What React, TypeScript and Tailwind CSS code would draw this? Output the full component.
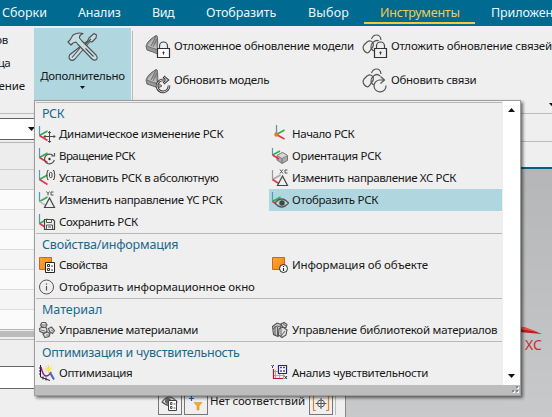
import React from "react";

type IconProps = { children: React.ReactNode; className?: string };

const Icon16 = ({ children, className = "" }: IconProps) => (
  <svg viewBox="0 0 18 18" fill="none" className={`h-[18px] w-[18px] shrink-0 ${className}`}>
    {children}
  </svg>
);

const Csys = ({ x = "#e8304a", y = "#35ab45", z = "#4d9cb8" }: { x?: string; y?: string; z?: string }) => (
  <g strokeWidth="1.2">
    <path d="M1.5 1v9.500" stroke={z} />
    <path d="M1.500 10.500L9.500 6" stroke={y} strokeWidth="1.500" />
    <path d="M1.500 10.500L9.500 15.500" stroke={x} strokeWidth="1.500" />
  </g>
);

const Move = () => (
  <Icon16>
    <Csys />
    <path d="M11.500 6.500v11M6 11.500h11M10 8l1.500-1.500L13 8M10 16l1.500 1.500L13 16M7.500 10L6 11.500 7.500 13M15.500 10l1.500 1.500-1.500 1.500" stroke="#4a4a4a" />
  </Icon16>
);
const Rotate = () => (
  <Icon16>
    <Csys />
    <path d="M15 8.500a4.900 4.900 0 1 0 1.300 4.500M16.500 6v3h-3" stroke="#555" strokeWidth="1.200" />
    <circle cx="11.500" cy="12" r="1.200" fill="#333" />
  </Icon16>
);
const Absolute = () => (
  <Icon16>
    <Csys />
    <path d="M10.500 1.500h-1q-1.500 4.500 0 9h1M15 1.500h1q1.500 4.500 0 9h-1" stroke="#444" />
    <rect x="11.500" y="3.500" width="2.500" height="5" rx="1" stroke="#444" />
  </Icon16>
);
const Direction = ({ axis }: { axis: "Y" | "X" }) => (
  <Icon16>
    {axis === "Y" ? <Csys x="#bdbdbd" /> : <Csys y="#aaa" z="#999" />}
    <path d="M11.500 7L16.500 16.500h-10z" stroke="#444" strokeWidth="1.200" fill="#efefef" />
    {axis === "Y" ? (
      <path d="M8.500 .5L10 2.500 11.500 .5M10 2.500v2M15.500 1H13v3h2.500" stroke="#555" />
    ) : (
      <path d="M9 .5l3 4M12 .5l-3 4M16.500 1H14v3h2.500" stroke="#555" />
    )}
  </Icon16>
);
const Save = () => (
  <Icon16>
    <Csys />
    <path d="M6.500 6.500h8.500l1.500 1.500v8.500h-10z" fill="#efefef" stroke="#444" strokeWidth="1.200" />
    <path d="M8.500 6.500v3h5v-3M8.500 16.500v-4.500h6v4.500M10 14h3" stroke="#555" />
  </Icon16>
);
const Origin = () => (
  <Icon16>
    <path d="M5.500 0v10" stroke="#4d9cb8" strokeWidth="1.300" />
    <path d="M5.500 9.500L13.500 5" stroke="#35ab45" strokeWidth="1.500" />
    <path d="M5.500 9.500L13.500 14" stroke="#e8304a" strokeWidth="1.500" />
    <circle cx="5.500" cy="9.500" r="2.200" fill="#e27b22" />
  </Icon16>
);
const Orient = () => (
  <Icon16>
    <path d="M6 8.500L11.500 5.500l5 3v5l-5.500 3-5-3.500z" fill="#aaa" stroke="#777" />
    <path d="M6 8.500l5.500-3 5 3L11 11.500z" fill="#d8d8d8" stroke="#888" />
    <path d="M11 11.500v5" stroke="#777" />
    <path d="M1.500 1v7" stroke="#4d9cb8" strokeWidth="1.200" />
    <path d="M1.500 8L9 4" stroke="#35ab45" strokeWidth="1.500" />
    <path d="M1.500 8L8 12" stroke="#e8304a" strokeWidth="1.500" />
  </Icon16>
);
const Eye = () => (
  <Icon16>
    <Csys />
    <path d="M4 12q6.500-8 13.500 0-7 8-13.500 0z" fill="#b0d7e0" stroke="#555" strokeWidth="1.300" />
    <circle cx="11" cy="12" r="2.700" fill="#444" />
  </Icon16>
);
const Orange = () => (
  <>
    <defs>
      <linearGradient id="orange" x2="1" y2="1">
        <stop stopColor="#f8aa2d" />
        <stop offset="1" stopColor="#ed8518" />
      </linearGradient>
    </defs>
    <path d="M1.500 1.500h12v12h-12z" fill="url(#orange)" stroke="#cf6425" />
  </>
);
const Properties = () => (
  <Icon16>
    <Orange />
    <path d="M7.500 6.500h9v10h-9z" fill="#fff" stroke="#222" />
    <path d="M9.500 8.500h2v2h-2zM9.500 12.500h2v2h-2zM13 10h2M13 14h2" stroke="#222" strokeWidth=".9" />
  </Icon16>
);
const ObjectInfo = () => (
  <Icon16>
    <Orange />
    <circle cx="12.500" cy="12.500" r="4" fill="#fff" stroke="#222" />
    <path d="M12.500 12v3M12.500 10v1" stroke="#222" strokeWidth="1.200" />
  </Icon16>
);
const Info = () => (
  <Icon16>
    <circle cx="8.500" cy="9" r="7" stroke="#555" />
    <path d="M8.500 8v4.500M8.500 5.500v1.200" stroke="#555" strokeWidth="1.200" />
  </Icon16>
);
const Materials = () => (
  <Icon16>
    <path d="M4 1.500h3.500L9 4 7.500 6.500H4L2.500 4zM1.500 7.500l3-1.500 4 1 .5 3.500-3 1.500-4-1.500zM5 13l4-2 3 1.500-1 3-4 1zM10.500 7.500l3-1.500 3 3.500-2 3-3-2z" fill="#e3e3e3" stroke="#5c5c5c" strokeWidth="1.200" />
    <path d="M3 4h5M3 9l4 1M8 14h3M13 9l2 1" stroke="#777" />
  </Icon16>
);
const Library = () => (
  <Icon16>
    <path d="M1.500 5.500L6 2l4 1.500v3l-3 9-4.500-2z" fill="#c8c8c8" stroke="#555" strokeWidth="1.100" />
    <path d="M4 5v9M6.500 6v10M2 8l4-3 4 1" stroke="#555" strokeWidth=".9" />
    <path d="M8 8l4-2 4 3-1 5-4 2.500L7.500 14zM10 3l3-1.500 3 2-1 3h-3z" fill="#ddd" stroke="#555" strokeWidth="1.100" />
    <path d="M10 8v7l4-5M12 3l3 2" stroke="#666" />
  </Icon16>
);
const Optimize = () => (
  <Icon16>
    <path d="M2.500 1v12L12 16.500M1 4h2M1 7h2M1 10h2M5 12.500v3M8 13.500v3" stroke="#222" />
    <path d="M3 3q2 9 5 9 3 0 5-4" stroke="#9519a5" strokeWidth="1.500" />
    <path d="M10.500 1v8M6.500 5h8M7.500 2l6 6M13.500 2l-6 6" stroke="#f0e640" />
    <path d="M12 8.500l4 7" stroke="#5367bd" strokeWidth="2.200" />
  </Icon16>
);
const Sensitivity = () => (
  <Icon16>
    <path d="M4.500 6v8M8.500 6v8M12.500 10v5M2 7.500h10M2 11.500h12" stroke="#aaa" />
    <path d="M2.500 5v9.500H12" stroke="#c1121e" strokeWidth="1.200" />
    <path d="M7.500 1.500h8v8h-8z" fill="#fff" stroke="#28219b" strokeWidth="1.200" />
    <path d="M9 3.500h2M12 3.500h2M9 7h2M12 7h2" stroke="#4741a8" strokeWidth="1.500" />
    <path d="M.5 1L1.500 2.500 3 1M1.500 2.500v1.500M13.500 12l2.500 3M16 12l-2.500 3" stroke="#222" strokeWidth=".9" />
  </Icon16>
);

const Icon24 = ({ children }: IconProps) => (
  <svg viewBox="0 0 26 26" fill="none" className="h-[26px] w-[26px] shrink-0">
    {children}
  </svg>
);
const Shell = () => (
  <>
    <path d="M11 1.500q1.500 0 1.500 2L13 15l4 3-4 2-5-2-6-2-1-4q1-4 5-7z" fill="#989898" stroke="#666" />
    <path d="M2 12l8-9-4 9 4-3 2 6-6-1z" fill="#bcbcbc" />
    <path d="M11 2L6 12M2 12l5 2 6 2M12 5L8 13" stroke="#707070" />
  </>
);
const Links = () => (
  <g stroke="#555" strokeWidth="1.200">
    <path d="M9.500 5q1.500-4 5-4 4 0 4.500 5M2.500 17q-2.500-3-.5-6l3-3q4-2.500 6 1 1 3-1 5l-3 4q-2 2-4.500-1z" />
    <path d="M12 17q-3-1-3-4 0-3 2.500-5Q15 5 18 8" />
  </g>
);
const Lock = ({ fill = "#fff" }: { fill?: string }) => (
  <>
    <path d="M14.500 15v-3a4 4 0 0 1 8 0v3" stroke="#efefef" strokeWidth="3" />
    <path d="M14.500 15v-3a4 4 0 0 1 8 0v3" stroke="#444" strokeWidth="1.200" />
    <path d="M12.500 14.500h12v9h-12z" fill={fill} stroke="#333" strokeWidth="1.200" />
    <path d="M18.500 17.500v3M17.500 18.500h2" stroke="#333" strokeWidth="1.200" />
  </>
);
const Refresh = ({ heavy = false }: { heavy?: boolean }) => (
  <>
    {heavy && <path d="M24 17.500a6 6 0 1 1-7-5.500h5M18.500 8.500L22.500 12l-4 3.500" stroke="#2e2e2e" strokeWidth="2.600" />}
    <path
      d="M24 17.500a6 6 0 1 1-7-5.500h5M18.500 8.500L22.500 12l-4 3.500"
      stroke={heavy ? "#f2f2f2" : "#555"}
      strokeWidth={heavy ? 0.9 : 1.2}
    />
  </>
);

const Tools = () => (
  <svg viewBox="0 0 32 30" fill="#c6dee3" stroke="#4f4f4f" strokeWidth="1.100" strokeLinejoin="round" className="h-[30px] w-8">
    <path d="M27 1.500l2.500 1.500-.5 3-4 4-2-.5L8 27q-3 2.500-5 .5-2-2 0-5L20.500 9 22 6z" />
    <path d="M5 25.500l8-9.500M16 14.500l8-7.500" fill="none" />
    <path d="M1 10l2-2 3-5q5-3 10-1.500-4 1.500-3.500 4.500L15 9l14 14q2 3 .5 4.500-2 1.500-4.500-.5L11 12.500 9 10 6 11l-2 2z" />
    <path d="M18.500 16.500l8 8" fill="none" />
  </svg>
);

const tabs = [
  { text: "Сборки", cls: "pl-[2px] w-[78px]" },
  { text: "Анализ", cls: "w-[74px] tracking-[-0.2px]" },
  { text: "Вид", cls: "w-[54px] tracking-[-0.5px]" },
  { text: "Отобразить", cls: "w-[102px] tracking-[-0.1px]" },
  { text: "Выбор", cls: "w-[56px] tracking-[0.2px]" },
  { text: "Инструменты", cls: "w-[111px] pl-4 border-b-2 border-[#fcc73f] text-[#f4ca55] tracking-[-0.22px]" },
  { text: "Приложения", cls: "pl-4 tracking-[-0.1px]" },
];

type Entry = { text: string; icon: React.ReactNode; t: string; active?: boolean } | null;
type Group = { title: string; t: string; entries: Entry[] };

const groups: Group[] = [
  {
    title: "РСК",
    t: "tracking-[-0.45px]",
    entries: [
      { text: "Динамическое изменение РСК", icon: <Move />, t: "tracking-[-0.3px]" },
      { text: "Начало РСК", icon: <Origin />, t: "tracking-[-0.4px]" },
      { text: "Вращение РСК", icon: <Rotate />, t: "tracking-[-0.55px]" },
      { text: "Ориентация РСК", icon: <Orient />, t: "tracking-[-0.3px]" },
      { text: "Установить РСК в абсолютную", icon: <Absolute />, t: "tracking-[-0.34px]" },
      { text: "Изменить направление XC РСК", icon: <Direction axis="X" />, t: "tracking-[-0.35px]" },
      { text: "Изменить направление YC РСК", icon: <Direction axis="Y" />, t: "tracking-[-0.37px]" },
      { text: "Отобразить РСК", icon: <Eye />, t: "tracking-[-0.27px]", active: true },
      { text: "Сохранить РСК", icon: <Save />, t: "tracking-[-0.37px]" },
      null,
    ],
  },
  {
    title: "Свойства/информация",
    t: "tracking-[-0.18px]",
    entries: [
      { text: "Свойства", icon: <Properties />, t: "tracking-[-0.4px]" },
      { text: "Информация об объекте", icon: <ObjectInfo />, t: "tracking-[-0.12px]" },
      { text: "Отобразить информационное окно", icon: <Info />, t: "tracking-[-0.08px]" },
      null,
    ],
  },
  {
    title: "Материал",
    t: "tracking-normal",
    entries: [
      { text: "Управление материалами", icon: <Materials />, t: "tracking-[-0.35px]" },
      { text: "Управление библиотекой материалов", icon: <Library />, t: "tracking-[-0.25px]" },
    ],
  },
  {
    title: "Оптимизация и чувствительность",
    t: "tracking-[-0.29px]",
    entries: [
      { text: "Оптимизация", icon: <Optimize />, t: "tracking-[-0.33px]" },
      { text: "Анализ чувствительности", icon: <Sensitivity />, t: "tracking-[-0.33px]" },
    ],
  },
];

const Menu = () => (
  <div className="absolute left-[34px] top-[100px] flex h-[296px] w-[487px] flex-col border border-[#9d9d9d] bg-[#efefef] shadow-[2px_2px_3px_rgba(0,0,0,0.55)]">
    <div className="flex h-[284px]">
      <div className="w-[468px] pl-px pr-px pt-px">
        {groups.map((g) => (
          <section key={g.title} className="border-t border-[#b9b9b9]">
            <h3 className={`h-5 pl-[6px] text-[12.5px] leading-[22px] text-[#19698b] ${g.t}`}>{g.title}</h3>
            <div className="grid grid-cols-[233px_233px]">
              {g.entries.map((e, i) =>
                e ? (
                  <div key={i} className={`flex h-[22px] items-center whitespace-nowrap pl-[2px] ${e.active ? "bg-[#b0d7e0]" : ""}`}>
                    {e.icon}
                    <span className={`pb-px pl-[3px] leading-[18px] ${e.t}`}>{e.text}</span>
                  </div>
                ) : (
                  <div key={i} />
                ),
              )}
            </div>
          </section>
        ))}
      </div>
      <div className="flex flex-1 flex-col items-center justify-between bg-white pb-[7px] pt-[7px]">
        <svg viewBox="0 0 7 4" className="h-1 w-[7px]"><path d="M0 4L3.500 0 7 4z" fill="#111" /></svg>
        <svg viewBox="0 0 7 4" className="h-1 w-[7px]"><path d="M0 0h7L3.500 4z" fill="#111" /></svg>
      </div>
    </div>
    <div className="flex flex-1 items-end justify-end bg-[#bdbdbd] pb-px pr-px">
      <svg viewBox="0 0 8 8" className="h-2 w-2">
        <path d="M6 1h2v2H6zM6 5h2v2H6zM2 5h2v2H2z" fill="#f7f7f7" />
        <path d="M5 0h2v2H5zM5 4h2v2H5zM1 4h2v2H1z" fill="#858585" />
      </svg>
    </div>
  </div>
);

const Command = ({ icon, text, t }: { icon: React.ReactNode; text: string; t: string }) => (
  <div className="flex h-[34px] items-center gap-[3px] whitespace-nowrap">
    {icon}
    <span className={`pb-[3px] leading-[18px] ${t}`}>{text}</span>
  </div>
);

const ToolButton = ({ children }: { children: React.ReactNode }) => (
  <div className="flex h-6 w-6 shrink-0 items-center justify-center border border-[#777] bg-[#efefef]">{children}</div>
);

export default function App() {
  return (
    <div className="relative flex h-[417px] w-[552px] flex-col overflow-hidden bg-[#efefef] font-['Noto_Sans','Open_Sans',sans-serif] text-[11.5px] text-[#181818]">
      <nav className="flex h-[26px] shrink-0 whitespace-nowrap bg-[#006a90] pb-[2px] text-[12.5px] leading-[25px] text-[#edf6f9]">
        {tabs.map((t) => (
          <div key={t.text} className={`shrink-0 ${t.cls}`}>{t.text}</div>
        ))}
      </nav>
      <div className="flex h-[88px] shrink-0 border-b border-[#bbb]">
        <div className="w-[34px] shrink-0 pt-[2px] leading-[23px]">
          <div className="flex w-2 justify-end tracking-[-0.3px]">ов</div>
          <div className="flex w-[10px] justify-end tracking-[-0.6px]">ца</div>
          <div className="flex w-[25px] justify-end tracking-[-0.1px]">ение</div>
        </div>
        <div className="mt-[2px] flex w-[97px] shrink-0 flex-col items-center bg-[#b0d7e0] pt-1">
          <Tools />
          <span className="mt-[6px] leading-4 tracking-[-0.3px]">Дополнительно</span>
          <svg viewBox="0 0 5 3" className="mt-[2px] h-[3px] w-[5px]"><path d="M0 0h5L2.500 3z" fill="#111" /></svg>
        </div>
        <div className="ml-px mt-[5px] w-px shrink-0 bg-[#b9b9b9]" />
        <div className="ml-3 w-[217px] shrink-0 pt-[4px]">
          <Command icon={<Icon24><Shell /><Lock /></Icon24>} text="Отложенное обновление модели" t="tracking-[-0.2px]" />
          <Command icon={<Icon24><Shell /><Refresh heavy /></Icon24>} text="Обновить модель" t="tracking-[-0.3px]" />
        </div>
        <div className="shrink-0 pt-[4px]">
          <Command icon={<Icon24><Links /><Lock fill="#efefef" /></Icon24>} text="Отложить обновление связей" t="tracking-[-0.2px]" />
          <Command icon={<Icon24><Links /><Refresh /></Icon24>} text="Обновить связи" t="tracking-[-0.28px]" />
        </div>
      </div>
      <div className="flex flex-1">
        <div className="flex w-[345px] flex-col">
          <div className="mt-[4px] flex h-[22px] w-full items-center border-y border-[#5f5f5f] bg-white pl-7">
            <svg viewBox="0 0 7 4" className="h-1 w-[7px]"><path d="M0 0h7L3.500 4z" fill="#111" /></svg>
          </div>
          <div className="mt-[2px] h-[28px] border-y border-t-[#b5b5b5] border-b-[#ccc] bg-[#ededed]" />
          <div className="h-5 border-b border-[#ccc] bg-[#ededed]" />
          <div className="h-5 border-b border-[#ddd] bg-[#fbfbfb]" />
          <div className="h-5 border-b border-[#ddd] bg-[#f5f5f5]" />
          <div className="h-5 border-b border-[#ddd] bg-[#fbfbfb]" />
          <div className="h-5 border-b border-[#ddd] bg-[#f5f5f5]" />
          <div className="h-5 border-b border-[#ddd] bg-[#fbfbfb]" />
          <div className="h-5 border-b border-[#ddd] bg-[#f5f5f5]" />
          <div className="h-5 border-b border-[#b5b5b5] bg-[#fbfbfb]" />
          <div className="mt-[1px] h-[6px] bg-[#bcbcbc]" />
          <div className="mt-[2px] h-px bg-[#bbb]" />
          <div className="mt-[26px] h-[23px] border-y border-[#666] bg-white" />
          <div className="flex pl-[158px] pt-[2px]">
            <ToolButton>
              <svg viewBox="0 0 18 18" fill="none" className="h-[18px] w-[18px]"><path d="M1 8q7-10 15 0-7 7-15 0z" fill="#ddd" stroke="#555" strokeWidth="1.200" /><circle cx="7" cy="7" r="3" fill="#666" /><path d="M7.500 6.500h8v10h-8z" fill="#fff" stroke="#444" /><path d="M9.500 8.500h1.500v2H9.500zM9.500 12.500h1.500v2H9.500zM12.500 10h2M12.500 14h2" stroke="#444" strokeWidth=".9" /></svg>
            </ToolButton>
            <div className="ml-[2px]">
              <ToolButton>
                <svg viewBox="0 0 18 18" className="h-[18px] w-[18px]"><path d="M4.500 2v5M2 4.500h5" stroke="#1762d3" strokeWidth="1.200" /><path d="M7 8.500h8L12 12v4h-2v-4z" fill="#f9aa25" stroke="#d8922a" strokeWidth=".6" /></svg>
              </ToolButton>
            </div>
            <span className="w-[101px] shrink-0 whitespace-nowrap pl-[2px] leading-5 tracking-[-0.15px]">Нет соответствий</span>
            <ToolButton>
              <svg viewBox="0 0 18 18" fill="none" className="h-[18px] w-[18px]"><path d="M4 1.500H1.500v15H4M14 1.500h2.500v15H14" stroke="#e88122" strokeWidth="1.200" /><circle cx="9" cy="9.500" r="3.500" stroke="#555" /><path d="M9 4v11M3.500 9.500h11" stroke="#555" /></svg>
            </ToolButton>
            <div className="ml-[2px] w-px bg-[#bbb]" />
          </div>
        </div>
        <div className="flex flex-1 flex-col">
          <div className="h-[28px] border-b border-[#bbb]" />
          <div className="h-[25px]" />
          <div className="flex-1 border-l border-t-2 border-l-[#888] border-t-[#006087] bg-linear-to-b from-[#b5b6b8] to-[#c8c9cb]">
            <div className="flex h-full flex-col items-start pl-[173px] pt-[158px]">
              <svg viewBox="0 0 24 8" className="h-2 w-6"><path d="M0 0h5l18 7L0 5z" fill="#b81f20" /><path d="M0 0h5l14 5L0 2z" fill="#ee4d48" /></svg>
              <span className="pl-[6px] pt-[2px] text-[14px] leading-[15px] text-[#c92c31]">XC</span>
            </div>
          </div>
        </div>
      </div>
      <Menu />
      <svg viewBox="0 0 5 3" className="absolute left-[549px] top-[103px] h-[3px] w-[5px]"><path d="M0 0h5L2.500 3z" fill="#111" /></svg>
    </div>
  );
}
